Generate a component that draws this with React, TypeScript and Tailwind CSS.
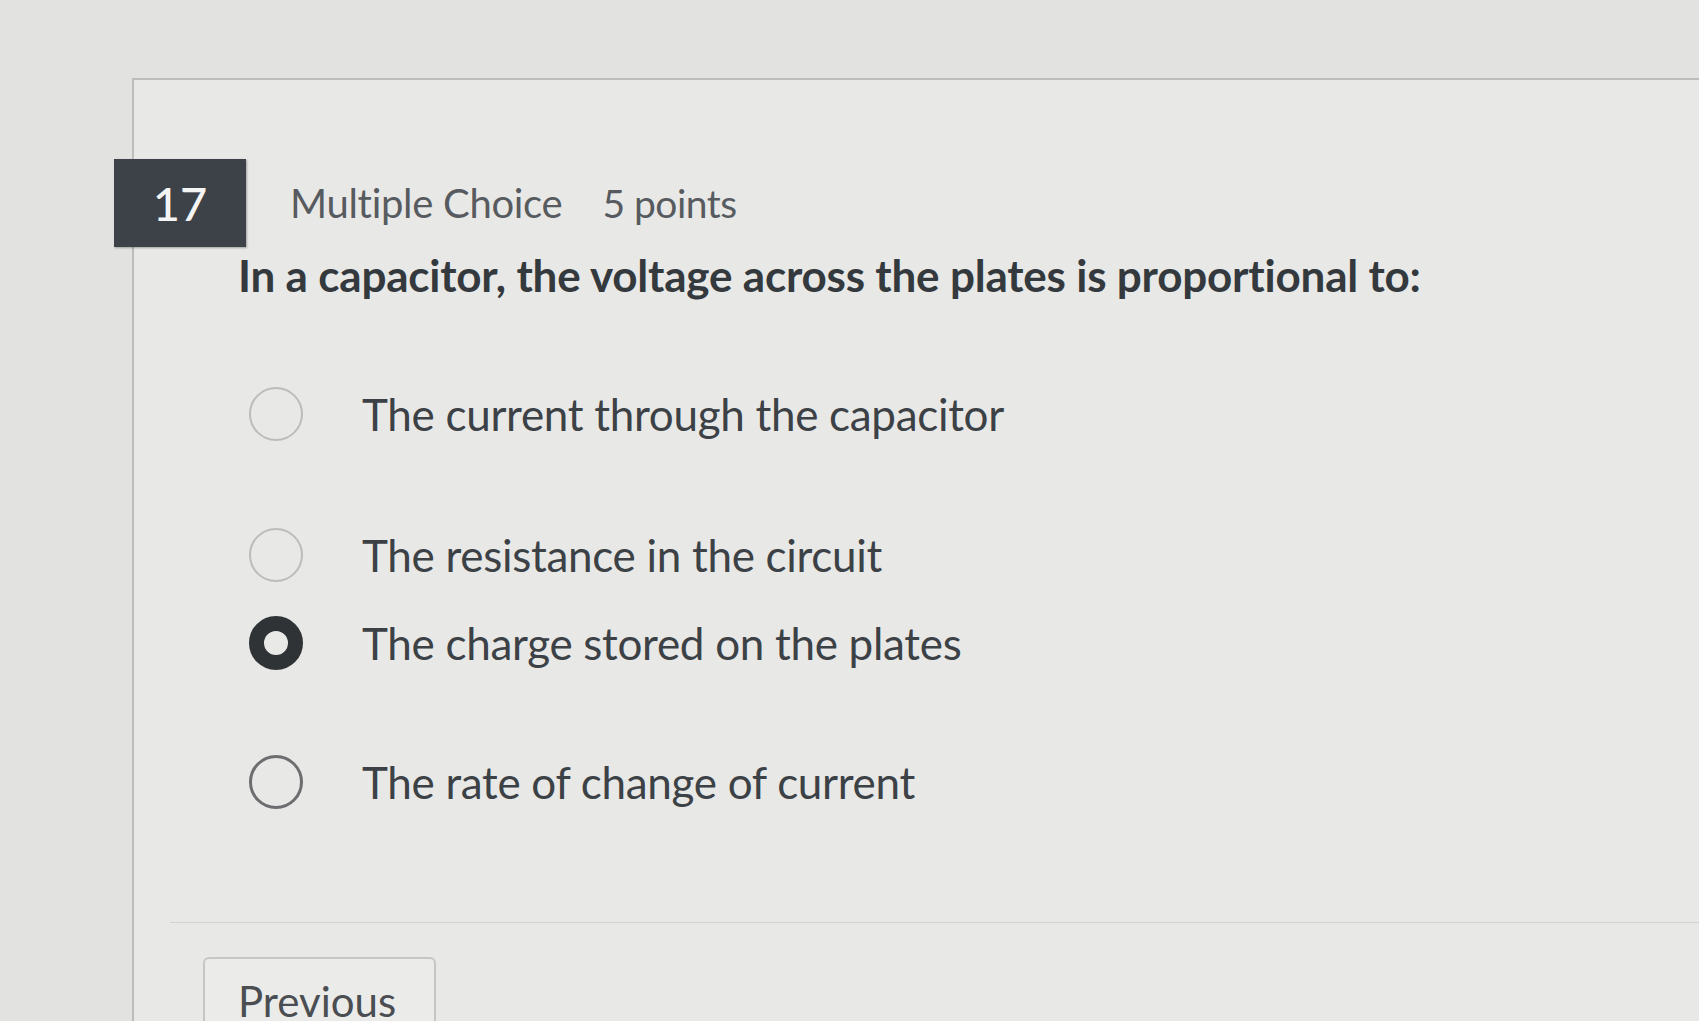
import React from "react";

const options = [
  { label: "The current through the capacitor", mt: "mt-[82px]", state: "light" },
  { label: "The resistance in the circuit", mt: "mt-[81px]", state: "light" },
  { label: "The charge stored on the plates", mt: "mt-[28px]", state: "selected" },
  { label: "The rate of change of current", mt: "mt-[79px]", state: "dark" },
];

function Radio({ state }: { state: string }) {
  if (state === "selected") {
    return <div className="w-[54px] h-[54px] shrink-0 rounded-full border-[15px] border-[#2f3336] bg-[#e9e9e7]" />;
  }
  if (state === "dark") {
    return <div className="w-[54px] h-[54px] shrink-0 rounded-full border-[3px] border-[#6b6d6f]" />;
  }
  return <div className="w-[54px] h-[54px] shrink-0 rounded-full border-2 border-[#bcbcba]" />;
}

export default function App() {
  return (
    <div
      className="w-[1699px] h-[1021px] overflow-hidden bg-[#e2e2e0] pt-[78px] pl-[132px]"
      style={{ fontFamily: "Lato, 'Open Sans', 'Liberation Sans', sans-serif" }}
    >
      <div className="h-full border-t-2 border-l-2 border-[#bdbdbb] bg-[#e8e8e6] pt-[79px]">
        {/* header */}
        <div className="flex items-center -ml-[20px]">
          <div className="w-[132px] h-[88px] bg-[#3d4248] text-[#f4f4f4] text-[47px] font-medium leading-none flex items-center justify-center shadow-[1px_1px_2px_rgba(0,0,0,0.3)]">
            17
          </div>
          <div className="ml-[44px] text-[40px] leading-[1.2] text-[#575b5f] tracking-[-0.3px]">Multiple Choice</div>
          <div className="ml-[40px] text-[39px] leading-[1.2] text-[#575b5f] tracking-[-0.5px]">5 points</div>
        </div>

        {/* question */}
        <div className="pl-[104px] mt-[2px] text-[44px] leading-[1.2] font-bold text-[#34393e] tracking-[-0.2px]">
          In a capacitor, the voltage across the plates is proportional to:
        </div>

        {/* options */}
        <div className="flex flex-col pl-[115px]">
          {options.map((o, i) => (
            <div key={i} className={`flex items-center ${o.mt}`}>
              <Radio state={o.state} />
              <span className="ml-[59px] text-[44px] leading-[60px] text-[#3c4146] tracking-[-0.3px]">{o.label}</span>
            </div>
          ))}
        </div>

        {/* footer */}
        <div className="ml-[36px] mt-[110px] border-t border-[#d3d3d1]" />
        <div className="ml-[69px] mt-[34px] w-[233px] h-[100px] rounded-[6px] border-2 border-[#c6c6c4] bg-[#ebebe9] pl-[33px] pt-[17px] text-[42px] leading-[1.2] text-[#4a4e52]">
          Previous
        </div>
      </div>
    </div>
  );
}
